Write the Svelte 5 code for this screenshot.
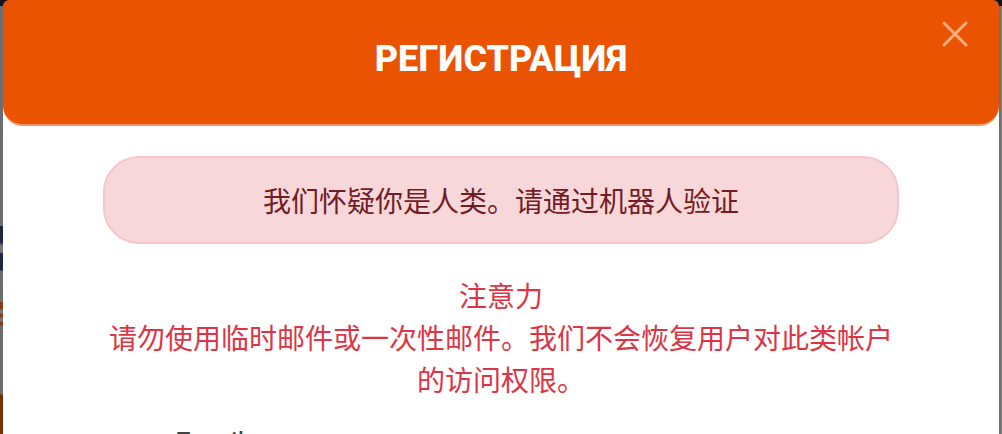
<script>
  let open = $state(true);
</script>

<div class="page">
  <div class="left-edge"></div>
  {#if open}
    <main class="dialog" role="dialog" aria-labelledby="title">
      <header>
        <h1 id="title">РЕГИСТРАЦИЯ</h1>
        <button class="close" type="button" onclick={() => (open = false)}>
          <svg viewBox="0 0 26 26" width="26" height="26" aria-hidden="true">
            <path d="M2 2 L24 24 M24 2 L2 24" />
          </svg>
        </button>
      </header>
      <div class="content">
        <div class="alert" role="alert">我们怀疑你是人类。请通过机器人验证</div>
        <p class="warning">注意力<br />请勿使用临时邮件或一次性邮件。我们不会恢复用户对此类帐户的访问权限。</p>
        <form>
          <label for="email">Email</label>
          <input id="email" type="email" />
        </form>
      </div>
    </main>
  {/if}
  <div class="right-edge"></div>
</div>

<style>
  :global(body) {
    overflow: hidden;
  }
  .page {
    display: grid;
    grid-template-columns: 3px minmax(0, 1fr) 3px;
    min-height: 100vh;
    background: linear-gradient(#0b1722 6px, #6d6d6d 6px);
    font-family: Roboto, "Noto Sans CJK SC", sans-serif;
    font-size: 28px;
    line-height: 42px;
  }
  .left-edge {
    grid-column: 1;
    background: linear-gradient(
      transparent 226px, #1d2745 226px, #1d2745 242px,
      #777 246px, #777 252px, #1d2745 254px, #1d2745 270px,
      transparent 271px, transparent 302px, #8a3c18 302px, #8a3c18 309px,
      #777 310px, #777 313px, #8a3c18 314px, #8a3c18 317px,
      #777 318px, #777 321px, #8a3c18 322px, #8a3c18 325px,
      transparent 326px, transparent 394px, #743200 395px
    );
  }
  .right-edge {
    grid-column: 3;
    background: linear-gradient(90deg, transparent 2px, #858585 2px);
    margin-top: 6px;
  }
  .dialog {
    grid-column: 2;
    background: linear-gradient(transparent 60px, #fff 60px);
  }
  header {
    position: relative;
    box-sizing: border-box;
    padding: 38px 80px 44px;
    background: #ea5400;
    border-bottom: 2px solid #ef9663;
    border-radius: 6px 6px 20px 20px;
    text-align: center;
  }
  h1 {
    margin: 0;
    color: #fff;
    font-size: 36px;
    font-weight: 800;
    line-height: 42px;
  }
  .close {
    position: absolute;
    top: 21px;
    right: 31px;
    display: flex;
    padding: 0;
    border: 0;
    background: none;
    cursor: pointer;
  }
  .close path {
    fill: none;
    stroke: #ffad80;
    stroke-width: 3;
    stroke-linecap: round;
  }
  .content {
    padding: 30px 100px 0;
  }
  .alert {
    padding: 24px 24px 18px;
    border: 2px solid #f5c6cb;
    border-radius: 36px;
    background: #f8d7da;
    color: #721c24;
    text-align: center;
  }
  .warning {
    margin: 33px 0 19px;
    color: #dc3545;
    text-align: center;
  }
  form {
    display: grid;
    gap: 12px;
    padding: 0 72px;
  }
  label {
    color: #444;
  }
  input {
    padding: 12px 20px;
    border: 2px solid #ccc;
    border-radius: 24px;
    font: inherit;
  }
</style>
